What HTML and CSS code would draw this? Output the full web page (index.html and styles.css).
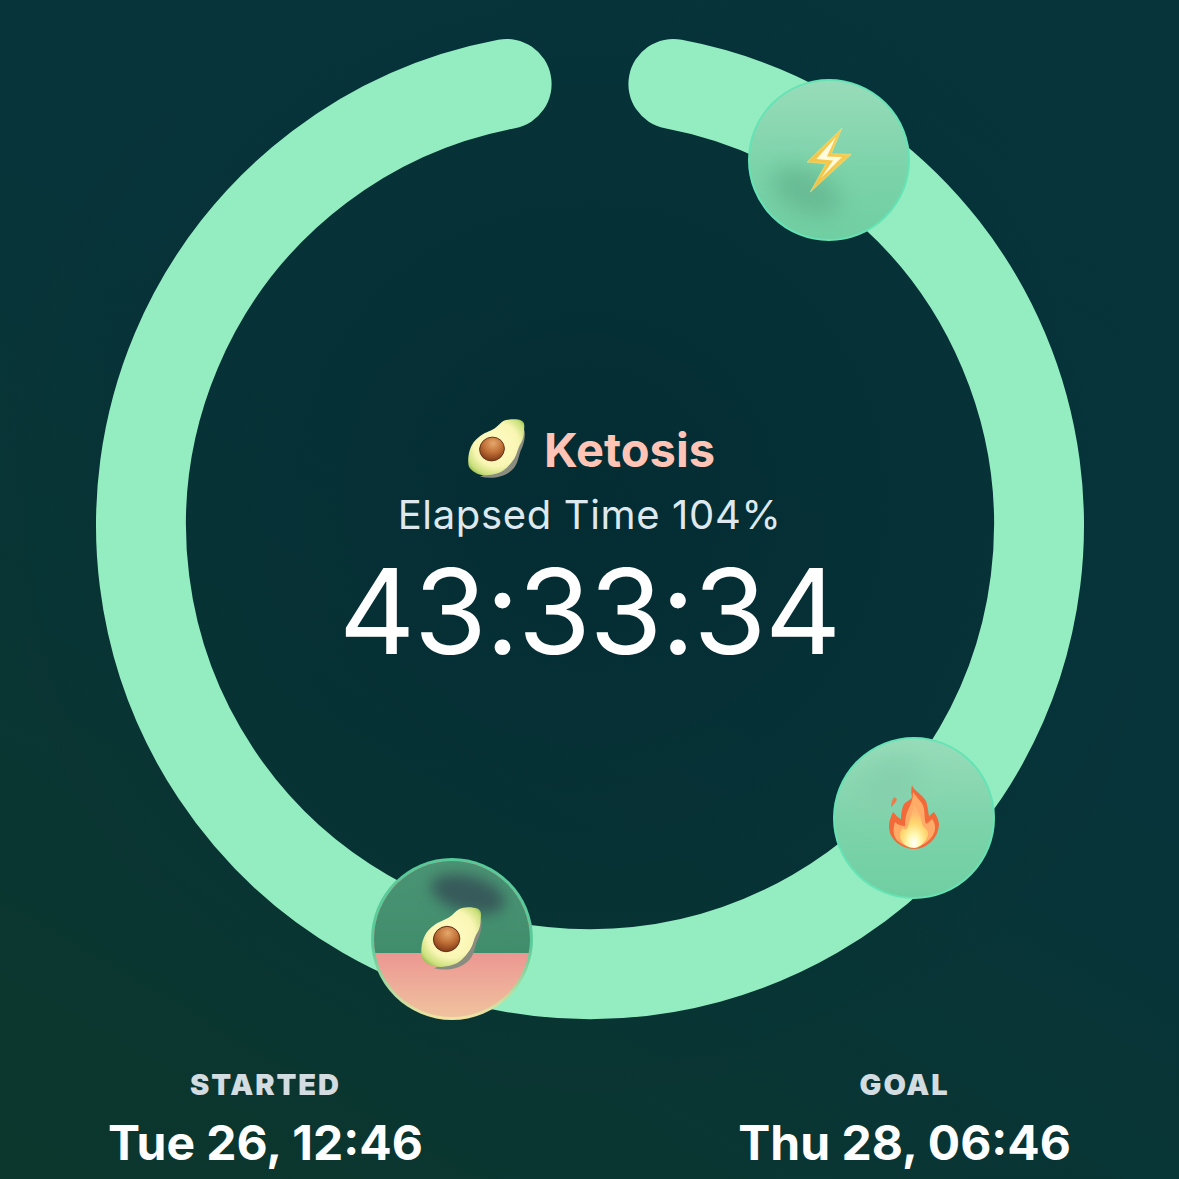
FILE: index.html
```html
<!DOCTYPE html>
<html lang="en">
<head>
<meta charset="utf-8">
<title>Fasting timer</title>
<link rel="stylesheet" href="styles.css">
</head>
<body>
<svg class="defs" width="0" height="0" aria-hidden="true">
  <defs>
    <radialGradient id="flesh" cx="0.5" cy="0.45" r="0.64">
      <stop offset="0" stop-color="#fffcc4"/>
      <stop offset="0.62" stop-color="#f9f6b4"/>
      <stop offset="0.88" stop-color="#cbe07c"/>
      <stop offset="1" stop-color="#98be54"/>
    </radialGradient>
    <radialGradient id="pit" cx="0.62" cy="0.3" r="0.75">
      <stop offset="0" stop-color="#e4a86c"/>
      <stop offset="0.5" stop-color="#c27238"/>
      <stop offset="1" stop-color="#7e3716"/>
    </radialGradient>
    <linearGradient id="bolt" x1="1" y1="0" x2="0" y2="1">
      <stop offset="0" stop-color="#f8cf55"/>
      <stop offset="1" stop-color="#f0c244"/>
    </linearGradient>
    <radialGradient id="flameCore" cx="0.5" cy="0.88" r="0.72">
      <stop offset="0" stop-color="#ffffff"/>
      <stop offset="0.3" stop-color="#fff8b0"/>
      <stop offset="0.65" stop-color="#ffd66e"/>
      <stop offset="1" stop-color="#ffb56e"/>
    </radialGradient>
    <symbol id="avocado" viewBox="0 0 60 62">
      <path fill="#8a8c80" d="M56.500 12C57.500 17 56.500 24 54 30C50.500 36 51 44 45.500 50.500C38 59 24 61.500 12 58.500C22 56 50 30 56.500 12Z"/>
      <path fill="url(#flesh)" d="M48 1.300C53 1.500 56.500 3.500 56.300 8C56 14 56 20 53 25C49.500 30 49.500 36 46 41C41 48.500 35.500 53.500 29.700 55.300C23 57.500 15 58 9.700 56C4 53 .3 50 .3 45.300C0 41 .5 37 1.300 33.700C3.500 26 7 22 11 19C16 14.500 22 13.500 26.500 10.500C31 7.500 33.500 3 38 2C41 1.300 45 1.200 48 1.300Z"/>
      <ellipse cx="24" cy="31" rx="12.500" ry="11.800" transform="rotate(-22 24 31)" fill="url(#pit)" stroke="#5e2a12" stroke-width=".8"/>
    </symbol>
    <symbol id="lightning" viewBox="0 0 45 66">
      <path fill="url(#bolt)" stroke="#f9df7c" stroke-width=".6" d="M35 1L0 35L19 36.700L3.300 65L44.300 27.300L24.300 26.700Z"/>
      <path fill="#fffbdc" d="M29 10L9.500 32L26 33.500L14 51L35 30L20 29.500Z"/>
    </symbol>
    <symbol id="flame" viewBox="0 0 50 64">
      <path fill="#f2693a" d="M23 0C24 5 33 9 37 16C39 21 39 27 40 31C42 30 43 28 45 27C48 31 50 36 50 40C49 47 47 52 43 56C38 61 32 64 25 64C18 64 12 61 7 57C2 52 0 47 0 41C0 36 2 31 4 27C6 29 9 33 12 34C12 28 13 23 15 19C18 16 22 15 23 12C22 8 22 4 23 0Z"/>
      <path fill="#ffab68" d="M24 7C28 13 34 17 35 24C36 29 35 34 37 39C39 38 41 36 43 34C47 39 47 45 44 50C40 57 32 62 25 62C18 62 11 59 7 54C4 49 4 43 6 37C9 40 13 41 16 41C16 34 17 28 20 23C22 19 24 14 24 7Z"/>
      <path fill="url(#flameCore)" d="M25 20C29 26 32 32 33 38C34 42 36 43 38 45C40 48 39 52 37 55C33 60 29 63 25 63C20 63 14 60 12 55C10 50 11 46 14 43C17 46 19 43 20 38C21 32 24 27 25 20Z"/>
      <path fill="#ef7a4a" d="M5 14L8 16C7 19 4 23 2 24C2 21 3 17 5 14Z" transform="translate(0 -2)"/>
    </symbol>
  </defs>
</svg>

<main class="screen">
  <section class="dial">
    <svg class="ring" viewBox="0 0 1179 1050" aria-hidden="true">
      <path class="ring-arc" d="M673.400 84 A449 449 0 1 1 506.600 84"/>
    </svg>

    <div class="readout">
      <div class="stage-name">
        <svg class="stage-icon"><use href="#avocado"/></svg>
        <span class="stage-label">Ketosis</span>
      </div>
      <div class="elapsed">Elapsed Time 104%</div>
      <div class="timer">43:33:34</div>
    </div>

    <div class="badge badge-bolt">
      <span class="blob blob-bolt"></span>
      <svg class="icon-bolt"><use href="#lightning"/></svg>
    </div>
    <div class="badge badge-fire">
      <span class="blob blob-fire"></span>
      <svg class="icon-fire"><use href="#flame"/></svg>
    </div>
    <div class="badge badge-avo">
      <span class="blob blob-avo"></span>
      <svg class="icon-avo"><use href="#avocado"/></svg>
    </div>
  </section>

  <section class="stats">
    <div class="stat">
      <div class="stat-label">STARTED</div>
      <div class="stat-value">Tue 26, 12:46</div>
    </div>
    <div class="stat">
      <div class="stat-label">GOAL</div>
      <div class="stat-value">Thu 28, 06:46</div>
    </div>
  </section>
</main>
</body>
</html>
```

FILE: styles.css
```css
* { box-sizing: border-box; }

html, body {
  margin: 0;
  height: 100%;
}

body {
  width: 1179px;
  height: 1179px;
  overflow: hidden;
  font-family: Inter, "Liberation Sans", sans-serif;
  color: #fff;
  background:
    radial-gradient(circle at 590px 500px, #042d33 0, rgba(4, 45, 51, 0) 600px),
    linear-gradient(30deg, #0b372c 0%, #07343a 55%, #06343a 100%);
}

.defs { position: absolute; }

.screen {
  display: flex;
  flex-direction: column;
  height: 100%;
}

.dial {
  position: relative;
  height: 1070px;
  flex: none;
}

.ring {
  position: absolute;
  left: 0;
  top: 0;
  width: 1179px;
  height: 1050px;
}

.ring-arc {
  fill: none;
  stroke: #94edc0;
  stroke-width: 90;
  stroke-linecap: round;
}

/* centre readout over the ring */
.readout {
  position: absolute;
  left: 0;
  right: 0;
  top: 417px;
  display: flex;
  flex-direction: column;
  align-items: center;
}

.stage-name {
  display: flex;
  align-items: center;
  gap: 16px;
  height: 64px;
  padding-left: 4px;
}

.stage-icon { width: 60px; height: 62px; }

.stage-label {
  font-size: 47px;
  font-weight: 700;
  color: #ffc4b6;
}

.elapsed {
  margin-top: 9px;
  font-size: 40px;
  line-height: 50px;
  letter-spacing: 0.65px;
  color: #dde9ee;
}

.timer {
  margin-top: 6px;
  font-size: 118px;
  line-height: 130px;
  letter-spacing: -1.4px;
  font-weight: 400;
  color: #fff;
}

/* badges on the ring */
.badge {
  position: absolute;
  width: 162px;
  height: 162px;
  border-radius: 50%;
  overflow: hidden;
  display: flex;
  align-items: center;
  justify-content: center;
  border: 2px solid #66e3b5;
  background: linear-gradient(180deg, #98dcba 0%, #7cd3aa 55%, #70cfa2 100%);
}

.badge-bolt { left: 748px; top: 79px; }
.badge-fire { left: 833px; top: 737px; }

.badge-avo {
  left: 371px;
  top: 858px;
  border: 3px solid transparent;
  background:
    linear-gradient(180deg, #4a9474 0%, #408d6c 100%) 0 0 / 100% 59% no-repeat padding-box,
    linear-gradient(180deg, #ec9792 59%, #f0c29e 100%) padding-box,
    linear-gradient(180deg, #58c998 0%, #5ccb9b 55%, #f5e3a2 100%) border-box;
}

.blob {
  position: absolute;
  border-radius: 50%;
}

.blob-bolt {
  left: 18px;
  top: 90px;
  width: 76px;
  height: 42px;
  background: #68bb94;
  filter: blur(11px);
  transform: rotate(25deg);
}

.blob-fire {
  left: 20px;
  top: 22px;
  width: 70px;
  height: 50px;
  background: #86d0ad;
  filter: blur(12px);
  transform: rotate(-30deg);
}

.blob-avo {
  left: 56px;
  top: 15px;
  width: 76px;
  height: 36px;
  background: #375a5a;
  filter: blur(7px);
  transform: rotate(15deg);
}

.icon-bolt {
  position: relative;
  width: 45px;
  height: 66px;
}

.icon-fire {
  position: relative;
  width: 50px;
  height: 64px;
  margin-top: -2px;
}

.icon-avo {
  position: relative;
  width: 64px;
  height: 66px;
  margin-left: 2px;
}

/* footer stats */
.stats {
  display: flex;
  justify-content: space-between;
  padding: 0 108px;
}

.stat {
  display: flex;
  flex-direction: column;
  align-items: center;
}

.stat-label {
  font-size: 29px;
  line-height: 30px;
  font-weight: 900;
  letter-spacing: 1.9px;
  color: #d3dce0;
}

.stat-value {
  margin-top: 15px;
  font-size: 48px;
  line-height: 56px;
  font-weight: 700;
  color: #fff;
}
```
